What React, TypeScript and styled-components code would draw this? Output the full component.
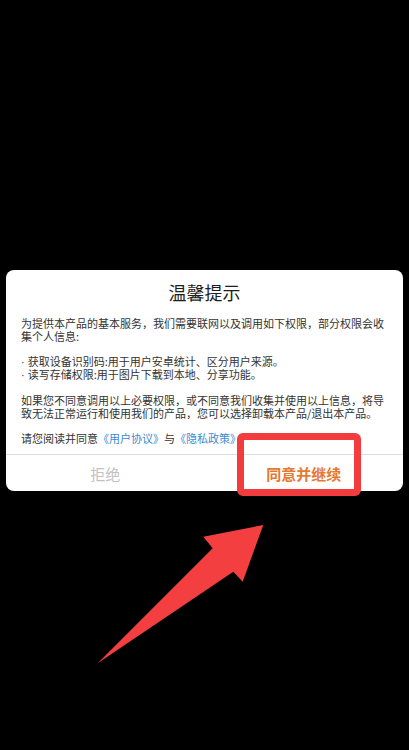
import React from "react";
import styled, { createGlobalStyle } from "styled-components";

const GlobalStyle = createGlobalStyle`
  html, body {
    margin: 0;
    padding: 0;
    background: #000;
  }
  * {
    box-sizing: border-box;
  }
`;

const Screen = styled.div`
  position: relative;
  width: 409px;
  height: 750px;
  overflow: hidden;
  background: #000;

  display: flex;
  flex-direction: column;
  padding: 270px 6px 0;
  font-family: "Noto Sans CJK SC", "Noto Sans", sans-serif;
`;

const Dialog = styled.div`
  background: #fff;
  border-radius: 8px;

  display: flex;
  flex-direction: column;
`;

const Title = styled.h1`
  margin: 0;
  padding-top: 10px;
  font-size: 18px;
  line-height: 25px;
  font-weight: 400;
  color: #1e1e1e;
  text-align: center;
`;

const Body = styled.div`
  padding: 12px 15px 10px;
  font-size: 11px;
  line-height: 12.5px;
  color: #333;
`;

const Paragraph = styled.p`
  margin: 0 0 12.5px;

  &:last-child {
    margin-bottom: 0;
  }
`;

const BulletLine = styled.div`
  display: block;
`;

const Dot = styled.span`
  font-family: "Liberation Sans", sans-serif;
  margin-right: 3px;
`;

const Link = styled.span`
  color: #3b8bd3;
`;

const ButtonRow = styled.div`
  border-top: 1px solid #dedede;
  height: 37px;

  display: grid;
  grid-template-columns: 1fr 1fr;
`;

const ActionButton = styled.button<{ $primary?: boolean }>`
  border: none;
  background: transparent;
  padding: 0;
  font-family: inherit;
  font-size: 15px;
  font-weight: ${(p) => (p.$primary ? 700 : 400)};
  color: ${(p) => (p.$primary ? "#e6782f" : "#c2c2c2")};

  display: flex;
  align-items: center;
  justify-content: center;
`;

// red annotation box drawn over the confirm button
const Highlight = styled.div`
  position: absolute;
  left: 237px;
  top: 433px;
  width: 124px;
  height: 63px;
  border: 7px solid #f33c3e;
  border-radius: 6px;
  pointer-events: none;
`;

const ArrowSvg = styled.svg`
  position: absolute;
  left: 0;
  top: 0;
  pointer-events: none;
`;

const permissions = [
  "获取设备识别码:用于用户安卓统计、区分用户来源。",
  "读写存储权限:用于图片下载到本地、分享功能。",
];

export default function App() {
  return (
    <>
      <GlobalStyle />
      <Screen>
        <Dialog>
          <Title>温馨提示</Title>
          <Body>
            <Paragraph>
              为提供本产品的基本服务，我们需要联网以及调用如下权限，部分权限会收集个人信息:
            </Paragraph>
            <Paragraph>
              {permissions.map((item) => (
                <BulletLine key={item}>
                  <Dot>·</Dot>
                  {item}
                </BulletLine>
              ))}
            </Paragraph>
            <Paragraph>
              如果您不同意调用以上必要权限，或不同意我们收集并使用以上信息，将导致无法正常运行和使用我们的产品，您可以选择卸载本产品/退出本产品。
            </Paragraph>
            <Paragraph>
              请您阅读并同意<Link>《用户协议》</Link>与<Link>《隐私政策》</Link>
            </Paragraph>
          </Body>
          <ButtonRow>
            <ActionButton>拒绝</ActionButton>
            <ActionButton $primary>同意并继续</ActionButton>
          </ButtonRow>
        </Dialog>

        <Highlight />
        <ArrowSvg width="409" height="750" viewBox="0 0 409 750">
          <polygon
            points="263.3,525 242.7,581.7 233.3,571.7 97.7,663.3 212.7,548.3 203.3,536.7"
            fill="#f33f3f"
          />
        </ArrowSvg>
      </Screen>
    </>
  );
}
